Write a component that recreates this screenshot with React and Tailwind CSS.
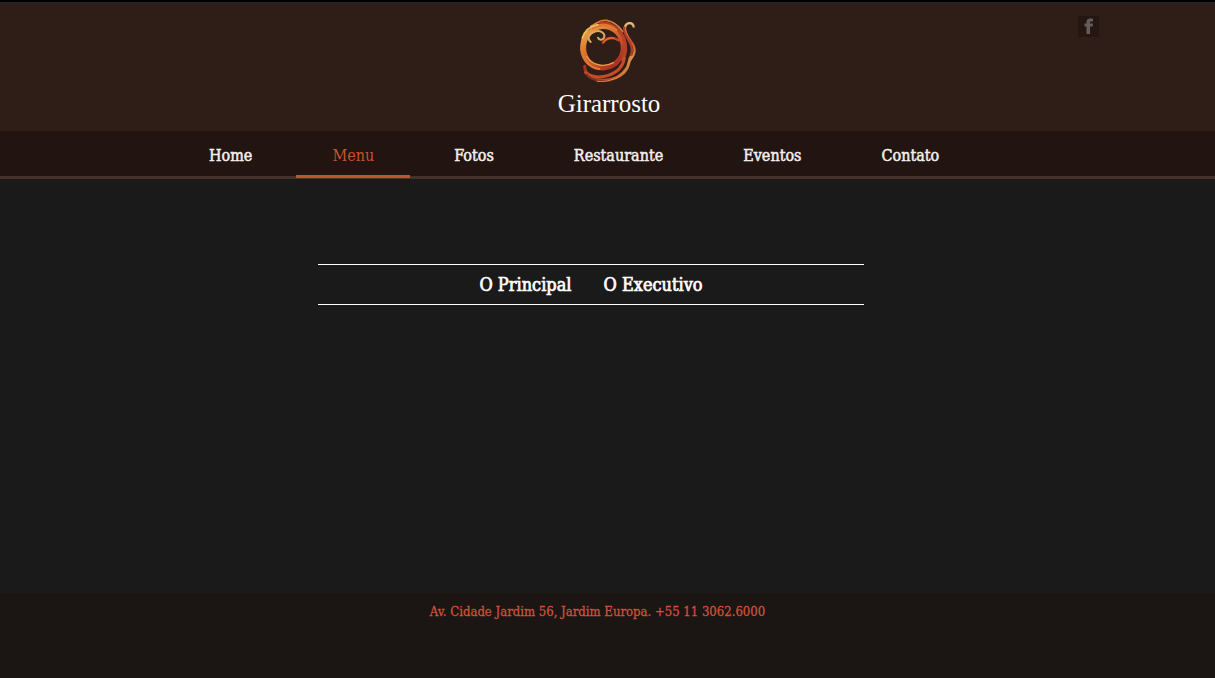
const links = ["Home", "Menu", "Fotos", "Restaurante", "Eventos", "Contato"];

function Logo() {
  return (
    <a href="#home" className="flex flex-col items-center pl-px text-white">
      <svg width="76" height="80" viewBox="0 0 228 240" fill="none" strokeLinecap="round" aria-hidden="true">
        <defs>
          <linearGradient id="flame" x1="40" y1="50" x2="160" y2="190" gradientUnits="userSpaceOnUse">
            <stop offset="0" stopColor="#e8b04c" />
            <stop offset="0.3" stopColor="#dd7a30" />
            <stop offset="0.55" stopColor="#c8542a" />
            <stop offset="0.8" stopColor="#a93222" />
            <stop offset="1" stopColor="#d96a2c" />
          </linearGradient>
          <linearGradient id="ember" x1="45" y1="190" x2="190" y2="130" gradientUnits="userSpaceOnUse">
            <stop offset="0" stopColor="#9c3023" />
            <stop offset="0.5" stopColor="#cf5a2b" />
            <stop offset="1" stopColor="#d99a4c" />
          </linearGradient>
          <linearGradient id="tail" x1="175" y1="36" x2="190" y2="150" gradientUnits="userSpaceOnUse">
            <stop offset="0" stopColor="#e6c685" />
            <stop offset="0.5" stopColor="#c94f28" />
            <stop offset="1" stopColor="#d9a055" />
          </linearGradient>
        </defs>
        <path d="M60 58C76 36 114 32 140 52C165 72 172 112 158 143C145 174 106 189 73 177C39 164 24 128 33 93C38 75 47 65 60 58ZM66 72C47 88 43 119 56 142C68 165 101 173 128 157C151 143 158 116 148 91C139 68 119 56 98 57C84 57 74 64 66 72Z" fill="url(#flame)" fillRule="evenodd" />
        <path d="M62 49C80 41 88 28 110 31C127 34 146 47 158 65" stroke="#ce8144" strokeWidth="5" />
        <path d="M92 39C121 39 151 56 162 87C169 108 167 132 158 149" stroke="#b94025" strokeWidth="10" />
        <path d="M68 55C90 40 118 43 138 60" stroke="#dc7a34" strokeWidth="8" />
        <path d="M37 84C44 61 61 49 83 44" stroke="#efbf60" strokeWidth="5" />
        <path d="M34 112C35 145 57 173 88 177" stroke="#e07b35" strokeWidth="6" />
        <path d="M50 139C65 165 101 174 130 158" stroke="#e99b3f" strokeWidth="4" />
        <path d="M62 96C50 86 57 70 74 65C91 59 105 69 103 80C101 91 87 92 84 83" stroke="#d9a85d" strokeWidth="6" />
        <path d="M99 98C108 83 128 79 147 91" stroke="#c94129" strokeWidth="8" />
        <path d="M101 95C111 85 122 83 132 84" stroke="#e08a3c" strokeWidth="3" />
        <path d="M191 50C189 36 171 36 166 48C160 62 171 78 183 94C200 117 195 132 181 149" stroke="url(#tail)" strokeWidth="7" />
        <path d="M163 53C158 70 178 88 184 108C188 122 185 135 178 146" stroke="#b53d27" strokeWidth="7" />
        <path d="M44 169C45 193 63 207 92 210C126 213 155 200 170 176C178 163 176 151 183 142" stroke="url(#ember)" strokeWidth="9" />
        <path d="M47 188C63 202 91 204 115 196C143 187 159 169 163 144" stroke="#c44c29" strokeWidth="9" />
        <path d="M50 193C62 211 94 217 123 211" stroke="#812c20" strokeWidth="5" />
        <path d="M81 214C119 218 151 201 165 183" stroke="#df8a3c" strokeWidth="3" />
      </svg>
      <span className="pl-0.5 font-['Liberation_Serif',serif] text-[25px] leading-7">Girarrosto</span>
    </a>
  );
}

export default function App() {
  return (
    <div className="flex min-h-screen flex-col bg-[#1a1a1a] font-['DejaVu_Serif_Condensed','DejaVu_Serif',serif] text-white">
      <header>
        <div className="relative flex h-[131px] justify-center border-t-2 border-black bg-[#2e1e17] pt-2">
          <div className="absolute inset-x-0 top-0 h-0.5 bg-[#2a2421]" />
          <Logo />
          <a href="#facebook" aria-label="Facebook" className="absolute top-3.5 right-[116px] flex size-[21px] items-center justify-center bg-[#241713]">
            <svg width="10" height="17" viewBox="0 0 10 17" fill="#665c58" aria-hidden="true">
              <path d="M2.5 16V8.5H.5V5.5h2V4.2C2.5 1.6 4 .5 6.2.5H9v3H7.2C6.2 3.5 6 4 6 4.8v.7h3l-.4 3H6V16z" />
            </svg>
          </a>
        </div>
        <nav aria-label="Principal" className="border-b-3 border-[#453229] bg-[#221411]">
          <ul className="mx-auto flex w-full max-w-[869px] gap-2">
            {links.map((name) => (
              <li key={name} className="-mb-0.5">
                <a
                  href={"#" + name.toLowerCase()}
                  aria-current={name === "Menu" ? "page" : undefined}
                  className={
                    "block border-b-3 px-9 pt-[13px] pb-[7px] text-base leading-6 " +
                    (name === "Menu"
                      ? "border-[#bd5632] text-[#c4532f]"
                      : "border-transparent text-[#f4efec] [-webkit-text-stroke:0.5px]")
                  }
                >
                  {name}
                </a>
              </li>
            ))}
          </ul>
        </nav>
      </header>
      <main className="flex flex-1 flex-col items-center pt-[85px] pr-[49px] pl-4">
        <ul className="flex w-full max-w-[546px] justify-center gap-8 border-y border-white py-[7px] text-lg leading-[25px] [-webkit-text-stroke:0.7px]">
          <li><a href="#principal">O Principal</a></li>
          <li><a href="#executivo">O Executivo</a></li>
        </ul>
      </main>
      <footer className="h-[85px] bg-[#1b1614] pt-[9px] pr-5 text-center text-[13px] leading-5 text-[#cf5236] [-webkit-text-stroke:0.3px]">
        <address className="not-italic">Av. Cidade Jardim 56, Jardim Europa. +55 11 3062.6000</address>
      </footer>
    </div>
  );
}
